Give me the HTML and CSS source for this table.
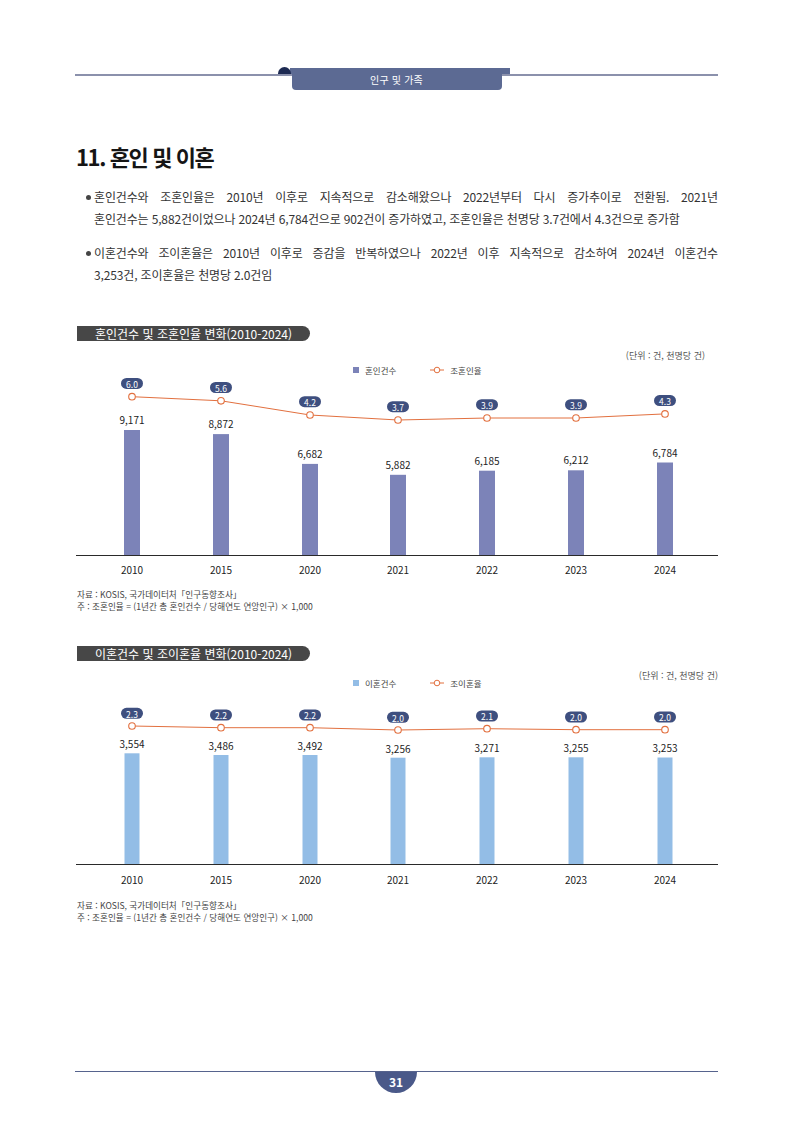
FILE: index.html
```html
<!DOCTYPE html>
<html lang="ko">
<head>
<meta charset="utf-8">
<title>11. 혼인 및 이혼</title>
<link rel="stylesheet" href="styles.css">
</head>
<body>
<div class="page">
  <header class="topbar">
    <div class="tab">인구 및 가족</div>
  </header>

  <h1 class="title">11. 혼인 및 이혼</h1>

  <ul class="bullets">
    <li>
      <span class="dot"></span>
      <div class="btext">
        <span class="ln just">혼인건수와 조혼인율은 2010년 이후로 지속적으로 감소해왔으나 2022년부터 다시 증가추이로 전환됨. 2021년</span>
        <span class="ln">혼인건수는 5,882건이었으나 2024년 6,784건으로 902건이 증가하였고, 조혼인율은 천명당 3.7건에서 4.3건으로 증가함</span>
      </div>
    </li>
    <li>
      <span class="dot"></span>
      <div class="btext">
        <span class="ln just">이혼건수와 조이혼율은 2010년 이후로 증감을 반복하였으나 2022년 이후 지속적으로 감소하여 2024년 이혼건수</span>
        <span class="ln">3,253건, 조이혼율은 천명당 2.0건임</span>
      </div>
    </li>
  </ul>

  <section class="chart chart-marriage">
    <div class="pill">혼인건수 및 조혼인율 변화(2010-2024)</div>
    <div class="meta">
      <div class="legend">
        <span class="lg-item"><span class="sq"></span>혼인건수</span>
        <span class="lg-item"><svg class="lg-line" width="14" height="8" viewBox="0 0 14 8"><line x1="0" y1="4" x2="14" y2="4" stroke="#e2703f" stroke-width="1"/><circle cx="7" cy="4" r="2.8" fill="#fff" stroke="#e2703f" stroke-width="1"/></svg>조혼인율</span>
      </div>
      <div class="unit">(단위 : 건, 천명당 건)</div>
    </div>
    <svg class="plot" width="643" height="201" viewBox="0 0 643 201">
      <g class="bars bars-m">
        <rect x="49" y="54" width="16" height="125"/>
        <rect x="138" y="58.1" width="16" height="120.9"/>
        <rect x="227" y="87.9" width="16" height="91.1"/>
        <rect x="315" y="98.8" width="16" height="80.2"/>
        <rect x="404" y="94.7" width="16" height="84.3"/>
        <rect x="493" y="94.3" width="16" height="84.7"/>
        <rect x="582" y="86.5" width="16" height="92.5"/>
      </g>
      <line class="axis" x1="1" y1="179.5" x2="643" y2="179.5"/>
      <g class="vals">
        <text x="57" y="43.5">9,171</text>
        <text x="146" y="47.6">8,872</text>
        <text x="235" y="77.4">6,682</text>
        <text x="323" y="88.3">5,882</text>
        <text x="412" y="84.2">6,185</text>
        <text x="501" y="83.8">6,212</text>
        <text x="590" y="76">6,784</text>
      </g>
      <polyline class="rate" points="57,20.7 146,24.8 235,39 323,44 412,42 501,42 590,37.9"/>
      <g class="dots">
        <circle cx="57" cy="20.7" r="3.3"/>
        <circle cx="146" cy="24.8" r="3.3"/>
        <circle cx="235" cy="39" r="3.3"/>
        <circle cx="323" cy="44" r="3.3"/>
        <circle cx="412" cy="42" r="3.3"/>
        <circle cx="501" cy="42" r="3.3"/>
        <circle cx="590" cy="37.9" r="3.3"/>
      </g>
      <g class="tags">
        <rect x="46" y="1.9" width="22" height="11" rx="5.5"/>
        <rect x="135" y="6" width="22" height="11" rx="5.5"/>
        <rect x="224" y="20.2" width="22" height="11" rx="5.5"/>
        <rect x="312" y="25.2" width="22" height="11" rx="5.5"/>
        <rect x="401" y="23.2" width="22" height="11" rx="5.5"/>
        <rect x="490" y="23.2" width="22" height="11" rx="5.5"/>
        <rect x="579" y="19.1" width="22" height="11" rx="5.5"/>
      </g>
      <g class="tagtext">
        <text x="57" y="7.6">6.0</text>
        <text x="146" y="11.7">5.6</text>
        <text x="235" y="25.9">4.2</text>
        <text x="323" y="30.9">3.7</text>
        <text x="412" y="28.9">3.9</text>
        <text x="501" y="28.9">3.9</text>
        <text x="590" y="24.8">4.3</text>
      </g>
      <g class="years">
        <text x="57" y="193">2010</text>
        <text x="146" y="193">2015</text>
        <text x="235" y="193">2020</text>
        <text x="323" y="193">2021</text>
        <text x="412" y="193">2022</text>
        <text x="501" y="193">2023</text>
        <text x="590" y="193">2024</text>
      </g>
    </svg>
    <div class="notes">
      <p>자료 : KOSIS, 국가데이터처「인구동향조사」</p>
      <p>주 : 조혼인율 = (1년간 총 혼인건수 / 당해연도 연앙인구) × 1,000</p>
    </div>
  </section>

  <section class="chart chart-divorce">
    <div class="pill">이혼건수 및 조이혼율 변화(2010-2024)</div>
    <div class="meta">
      <div class="legend">
        <span class="lg-item"><span class="sq"></span>이혼건수</span>
        <span class="lg-item"><svg class="lg-line" width="14" height="8" viewBox="0 0 14 8"><line x1="0" y1="4" x2="14" y2="4" stroke="#e2703f" stroke-width="1"/><circle cx="7" cy="4" r="2.8" fill="#fff" stroke="#e2703f" stroke-width="1"/></svg>조이혼율</span>
      </div>
      <div class="unit">(단위 : 건, 천명당 건)</div>
    </div>
    <svg class="plot" width="643" height="196" viewBox="0 0 643 196">
      <g class="bars bars-d">
        <rect x="49.5" y="61.3" width="15" height="111.2"/>
        <rect x="138.5" y="63" width="15" height="109.5"/>
        <rect x="227.5" y="63" width="15" height="109.5"/>
        <rect x="315.5" y="65.7" width="15" height="106.8"/>
        <rect x="404.5" y="65.3" width="15" height="107.2"/>
        <rect x="493.5" y="65.3" width="15" height="107.2"/>
        <rect x="582.5" y="65.5" width="15" height="107"/>
      </g>
      <line class="axis" x1="1" y1="172.5" x2="643" y2="172.5"/>
      <g class="vals">
        <text x="57" y="51">3,554</text>
        <text x="146" y="53">3,486</text>
        <text x="235" y="53">3,492</text>
        <text x="323" y="56">3,256</text>
        <text x="412" y="55">3,271</text>
        <text x="501" y="55">3,255</text>
        <text x="590" y="55">3,253</text>
      </g>
      <polyline class="rate" points="57,34 146,35.7 235,35.7 323,38 412,36.7 501,37.7 590,37.7"/>
      <g class="dots">
        <circle cx="57" cy="34" r="3.3"/>
        <circle cx="146" cy="35.7" r="3.3"/>
        <circle cx="235" cy="35.7" r="3.3"/>
        <circle cx="323" cy="38" r="3.3"/>
        <circle cx="412" cy="36.7" r="3.3"/>
        <circle cx="501" cy="37.7" r="3.3"/>
        <circle cx="590" cy="37.7" r="3.3"/>
      </g>
      <g class="tags">
        <rect x="46" y="15.8" width="22" height="11" rx="5.5"/>
        <rect x="135" y="17.5" width="22" height="11" rx="5.5"/>
        <rect x="224" y="17.5" width="22" height="11" rx="5.5"/>
        <rect x="312" y="19.8" width="22" height="11" rx="5.5"/>
        <rect x="401" y="18.5" width="22" height="11" rx="5.5"/>
        <rect x="490" y="19.5" width="22" height="11" rx="5.5"/>
        <rect x="579" y="19.5" width="22" height="11" rx="5.5"/>
      </g>
      <g class="tagtext">
        <text x="57" y="21.5">2.3</text>
        <text x="146" y="23.2">2.2</text>
        <text x="235" y="23.2">2.2</text>
        <text x="323" y="25.5">2.0</text>
        <text x="412" y="24.2">2.1</text>
        <text x="501" y="25.2">2.0</text>
        <text x="590" y="25.2">2.0</text>
      </g>
      <g class="years">
        <text x="57" y="187">2010</text>
        <text x="146" y="187">2015</text>
        <text x="235" y="187">2020</text>
        <text x="323" y="187">2021</text>
        <text x="412" y="187">2022</text>
        <text x="501" y="187">2023</text>
        <text x="590" y="187">2024</text>
      </g>
    </svg>
    <div class="notes">
      <p>자료 : KOSIS, 국가데이터처「인구동향조사」</p>
      <p>주 : 조혼인율 = (1년간 총 혼인건수 / 당해연도 연앙인구) × 1,000</p>
    </div>
  </section>

  <footer class="footer">
    <div class="pageno">31</div>
  </footer>
</div>
</body>
</html>
```

FILE: styles.css
```css
* { box-sizing: border-box; }

html, body {
  margin: 0;
  padding: 0;
  background: #ffffff;
}

body {
  font-family: "Noto Sans CJK KR", "Noto Sans", "Liberation Sans", sans-serif;
  color: #333333;
}

.page {
  width: 794px;
  min-height: 1123px;
  padding: 68px 76px 0 75px;
}

/* ---------- header ---------- */
.topbar {
  height: 22px;
  display: flex;
  justify-content: center;
  background: linear-gradient(to bottom,
    transparent 0, transparent 6px,
    #8b91ac 6px, #8b91ac 7.5px,
    transparent 7.5px, transparent 100%);
}

.tab {
  position: relative;
  width: 210px;
  height: 22px;
  background: #5c6a93;
  border-radius: 0 0 4px 4px;
  color: #ffffff;
  font-size: 10px;
  line-height: 23px;
  text-align: center;
  letter-spacing: 0.2px;
}

.tab::before {
  content: "";
  position: absolute;
  left: -2px;
  right: -8px;
  top: 0;
  height: 6px;
  background: #5c6a93;
}

.tab::after {
  content: "";
  position: absolute;
  left: -14px;
  top: -1px;
  width: 13px;
  height: 7px;
  border-radius: 7px 7px 0 0;
  background: #1d2a52;
}

/* ---------- title ---------- */
.title {
  margin: 51px 0 0 1px;
  font-size: 22px;
  line-height: 30px;
  font-weight: 700;
  color: #151515;
  letter-spacing: -1.4px;
}

/* ---------- bullets ---------- */
.bullets {
  list-style: none;
  margin: 15px 0 0;
  padding: 0;
}

.bullets li {
  display: flex;
  gap: 3px;
  margin-left: 11px;
  font-size: 12px;
  line-height: 22px;
  color: #333333;
}

.bullets li + li {
  margin-top: 12px;
}

.dot {
  flex-shrink: 0;
  width: 5px;
  height: 5px;
  margin-top: 9px;
  border-radius: 50%;
  background: #444444;
}

.btext {
  width: 624px;
}

.ln {
  display: block;
  white-space: nowrap;
  letter-spacing: -0.15px;
}

.ln.just {
  text-align: justify;
  text-align-last: justify;
}

/* ---------- charts ---------- */
.chart {
  margin-top: 40px;
}

.chart-divorce {
  margin-top: 34px;
}

.pill {
  width: 233px;
  height: 15px;
  margin-left: 2px;
  padding-left: 18px;
  background: #474747;
  border-radius: 0 8px 8px 0;
  color: #ffffff;
  font-size: 12px;
  line-height: 15px;
  white-space: nowrap;
}

.meta {
  display: flex;
  align-items: flex-start;
  margin-top: 9px;
}

.legend {
  display: flex;
  align-items: center;
  gap: 34px;
  margin-left: 278px;
  margin-top: 14px;
  font-size: 8.5px;
  line-height: 12px;
  color: #444444;
}

.chart-divorce .legend {
  margin-top: 7px;
}

.lg-item {
  display: flex;
  align-items: center;
  gap: 6px;
}

.sq {
  width: 6px;
  height: 6px;
  background: #7c83b8;
}

.chart-divorce .sq {
  background: #93bde6;
}

.lg-line {
  display: block;
}

.unit {
  margin-left: auto;
  padding-right: 13px;
  font-size: 9px;
  line-height: 12px;
  color: #555555;
  white-space: nowrap;
}

.chart-divorce .unit {
  padding-right: 0;
}

.plot {
  display: block;
  font-family: "Noto Sans CJK KR", "Noto Sans", "Liberation Sans", sans-serif;
}

.chart-divorce .plot {
  margin-top: 3px;
}

.bars-m rect { fill: #7c83b8; }
.bars-d rect { fill: #93bde6; }

.axis {
  stroke: #2a2a2a;
  stroke-width: 1;
}

.vals text,
.years text {
  font-size: 10px;
  fill: #222222;
  text-anchor: middle;
  dominant-baseline: central;
}

.rate {
  fill: none;
  stroke: #e2703f;
  stroke-width: 1;
}

.dots circle {
  fill: #ffffff;
  stroke: #e2703f;
  stroke-width: 1.1;
}

.tags rect {
  fill: #3e4f7f;
}

.tagtext text {
  font-size: 8.5px;
  fill: #ffffff;
  text-anchor: middle;
  dominant-baseline: central;
}

.notes {
  margin-top: 11px;
  margin-left: 2px;
  font-size: 8.6px;
  line-height: 12px;
  color: #444444;
}

.notes p {
  margin: 0;
  white-space: nowrap;
}

/* ---------- footer ---------- */
.footer {
  margin-top: 148px;
  border-top: 1.5px solid #56638d;
  display: flex;
  justify-content: center;
}

.pageno {
  width: 42px;
  height: 21px;
  margin-left: -1px;
  border-radius: 0 0 21px 21px;
  background: #4a5989;
  color: #ffffff;
  font-size: 12px;
  font-weight: 700;
  line-height: 19px;
  text-align: center;
}
```
